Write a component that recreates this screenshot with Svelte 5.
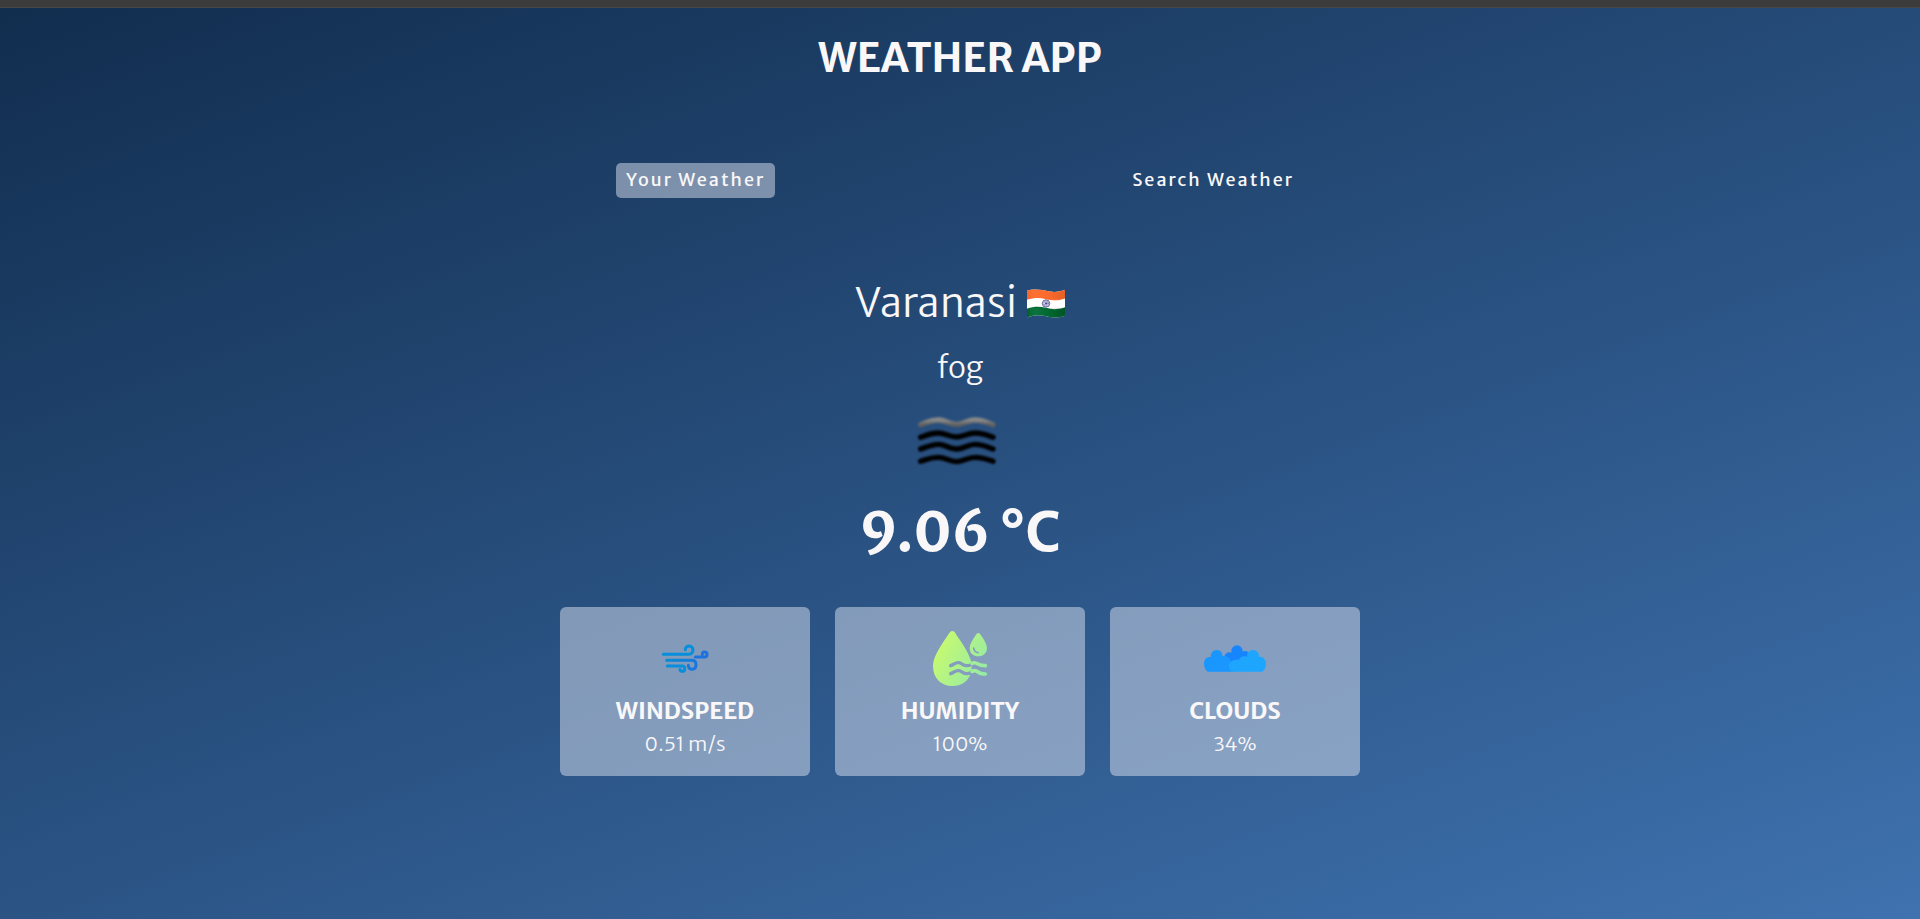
<script>
  let tab = $state('your');
</script>

<div class="page">
  <div class="strip"></div>
  <h1>WEATHER APP</h1>

  <nav class="tabs">
    <button class:current={tab === 'your'} onclick={() => (tab = 'your')}>Your Weather</button>
    <button class:current={tab === 'search'} onclick={() => (tab = 'search')}>Search Weather</button>
  </nav>

  <main>
    <div class="place">
      <p class="city">Varanasi</p>
      <svg class="flag" viewBox="0 0 114 86" role="img" aria-label="India">
        <defs>
          <clipPath id="wave"><path d="M0 5 C22 -3 38 1 57 5 C78 10 95 9 114 2 V80 C92 88 76 86 57 81 C38 76 22 77 0 85Z" /></clipPath>
          <linearGradient id="shade" x1="0" x2="1">
            <stop offset="0" stop-color="#000" stop-opacity="0.12" />
            <stop offset="0.25" stop-color="#fff" stop-opacity="0.04" />
            <stop offset="0.6" stop-color="#000" stop-opacity="0.05" />
            <stop offset="1" stop-color="#000" stop-opacity="0.22" />
          </linearGradient>
        </defs>
        <g clip-path="url(#wave)">
          <rect width="114" height="86" fill="#fff" />
          <path d="M0 0H114V28C92 36 76 34 57 30C38 25 22 25 0 32Z" fill="#ff6c2d" />
          <path d="M0 59C22 51 38 52 57 56C76 61 92 62 114 54V86H0Z" fill="#006c32" />
          <rect y="56" width="114" height="30" fill="url(#shade)" />
          <rect width="114" height="30" fill="url(#shade)" opacity="0.5" />
        </g>
        <circle cx="57" cy="43" r="11" fill="#fff" stroke="#3d3d86" stroke-width="2.5" />
        <circle cx="57" cy="43" r="6.5" fill="none" stroke="#7777ae" stroke-width="8" stroke-dasharray="1.3 1.25" />
        <circle cx="57" cy="43" r="3" fill="#3d3d86" />
      </svg>
    </div>
    <p class="desc">fog</p>
    <svg class="fog" viewBox="30 30 300 180" aria-hidden="true">
      <defs>
        <filter id="soft"><feGaussianBlur stdDeviation="2.6" /></filter>
        <linearGradient id="mist" x1="0" y1="0" x2="0" y2="1">
          <stop offset="0" stop-color="#8a8a8a" />
          <stop offset="1" stop-color="#606060" />
        </linearGradient>
      </defs>
      <g fill="none" stroke-width="16" stroke-linecap="round" stroke-linejoin="round" filter="url(#soft)">
        <path stroke="url(#mist)" d="M62 74C84 67 92 60 114 60S148 73 170 73S202 60 225 60S258 67 279 74" />
        <path stroke="#000" d="M62 112C84 104 92 99 114 99S148 111 170 111S202 99 225 99S258 104 279 112" />
        <path stroke="#000" d="M62 147C84 139 98 133 116 133S148 147 170 147S202 133 225 133S258 139 279 147" />
        <path stroke="#000" d="M62 184C84 177 92 172 114 172S152 185 170 185S202 172 225 172S258 177 279 184" />
      </g>
    </svg>
    <p class="temp">9.06 °C</p>

    <div class="cards">
      <section>
        <svg viewBox="9 -21 192 180" aria-hidden="true">
          <defs>
            <linearGradient id="breeze" gradientUnits="userSpaceOnUse" x1="80" y1="40" x2="160" y2="90">
              <stop offset="0" stop-color="#078ad5" />
              <stop offset="1" stop-color="#1c71e0" />
            </linearGradient>
          </defs>
          <g fill="none" stroke="url(#breeze)" stroke-width="9" stroke-linecap="round">
            <path stroke="#078edc" d="M40 58H115C125 58 129 51 129 45C129 29 106 29 106 44" />
            <path d="M50 76H125C135 76 138 82 138 89C138 107 115 107 115 91" />
            <path stroke="#078edc" d="M52 93H96C107 93 107 109 96 109C92 109 90 106 90 103" />
            <path stroke="#1c73df" d="M136 66H163C174 66 174 51 163 51C159 51 157 54 157 58" />
          </g>
        </svg>
        <h2>WINDSPEED</h2>
        <p>0.51 m/s</p>
      </section>
      <section>
        <svg viewBox="24 24 192 180" aria-hidden="true">
          <defs>
            <linearGradient id="dew" gradientUnits="userSpaceOnUse" x1="60" y1="80" x2="210" y2="160">
              <stop offset="0" stop-color="#c5f972" />
              <stop offset="1" stop-color="#91e9aa" />
            </linearGradient>
            <mask id="channels">
              <rect x="24" y="24" width="192" height="180" fill="#fff" />
              <g fill="none" stroke="#000" stroke-width="10" stroke-linecap="round">
                <path d="M92 137C101 134 106 127 116 128S129 138 142 137S151 133 156 131" />
                <path d="M92 161C101 158 106 151 116 152S129 162 142 161S151 157 156 154" />
              </g>
            </mask>
          </defs>
          <path fill="url(#dew)" mask="url(#channels)" d="M97 33C91 33 88 39 84 45C66 72 39 108 39 138C39 174 62 198 97 198C126 198 145 183 153 158C156 150 156 129 152 119C143 92 123 65 109 44C105 38 103 33 97 33Z" />
          <path fill="url(#dew)" d="M175 39C171 39 169 43 166 47C158 59 149 72 149 84C149 100 160 109 175 109S201 99 201 84C201 72 192 59 184 47C181 43 179 39 175 39Z" />
          <path d="M161 84C162 92 167 97 174 98" fill="none" stroke="#849dbe" stroke-width="5" stroke-linecap="round" />
          <g fill="none" stroke="url(#dew)" stroke-width="11" stroke-linecap="round">
            <path d="M156 130C164 126 168 128 174 132S187 137 196 137" />
            <path d="M156 154C164 149 168 151 174 156S187 162 196 162" />
          </g>
        </svg>
        <h2>HUMIDITY</h2>
        <p>100%</p>
      </section>
      <section>
        <svg viewBox="39 -6 192 180" aria-hidden="true">
          <g fill="#1685ff">
            <circle cx="141" cy="63" r="17" />
            <circle cx="118" cy="82" r="15" />
            <circle cx="165" cy="78" r="15" />
            <path d="M105 80L130 65H153L175 85V115H105Z" />
          </g>
          <path fill="#1a97ff" d="M53 125C44 119 42 109 42 99C42 88 52 79 63 80C61 69 69 60 80 60S99 69 97 79C107 75 119 82 121 92C130 97 134 110 130 125Z" />
          <path fill="#1ea6ff" d="M128 125C120 122 117 116 117 109C117 98 126 90 136 90C142 87 145 89 148 90C147 82 158 76 172 80C170 69 178 60 189 60S208 69 207 80C219 79 228 88 228 100C228 109 226 119 217 125Z" />
        </svg>
        <h2>CLOUDS</h2>
        <p>34%</p>
      </section>
    </div>
  </main>
</div>

<style>
  :global(body) {
    margin: 0;
  }
  .page {
    min-height: 100vh;
    box-sizing: border-box;
    display: flex;
    flex-direction: column;
    align-items: center;
    padding-bottom: 40px;
    color: #f9f7f7;
    font-family: 'Merriweather Sans', 'Noto Sans', 'Open Sans', sans-serif;
    background: linear-gradient(160deg, #112d4e 0%, #3f72af 100%);
  }
  .strip {
    align-self: stretch;
    height: 7px;
    background: #3c3c3c;
    border-bottom: 1px solid #474747;
  }
  h1,
  h2,
  p {
    margin: 0;
  }
  h1 {
    margin-top: 25px;
    font-size: 40px;
    line-height: 50px;
    font-weight: 700;
  }
  .tabs {
    width: 100%;
    max-width: 688px;
    margin-top: 80px;
    display: flex;
    justify-content: space-between;
  }
  button {
    padding: 4px 10px 6px;
    border: 0;
    border-radius: 5px;
    color: inherit;
    background: transparent;
    font: 500 18px/25px 'Merriweather Sans', 'Noto Sans', 'Open Sans', sans-serif;
    letter-spacing: 2px;
    cursor: pointer;
  }
  button.current {
    background: rgba(219, 226, 239, 0.5);
  }
  main {
    width: 100%;
    max-width: 800px;
    margin-top: 77px;
    display: flex;
    flex-direction: column;
    align-items: center;
  }
  .place {
    display: flex;
    align-items: center;
    gap: 10px;
  }
  .city {
    font-size: 40px;
    line-height: 56px;
    font-weight: 300;
  }
  .flag {
    width: 38px;
    height: 29px;
  }
  .desc {
    margin-top: 16px;
    font-size: 30px;
    line-height: 40px;
    font-weight: 300;
  }
  .fog {
    width: 100px;
    height: 60px;
    margin-top: 23px;
  }
  .temp {
    margin-top: 25px;
    font-size: 55px;
    line-height: 76px;
    font-weight: 700;
  }
  .cards {
    align-self: stretch;
    margin-top: 36px;
    display: grid;
    grid-template-columns: repeat(3, 1fr);
    gap: 25px;
  }
  section {
    display: flex;
    flex-direction: column;
    align-items: center;
    padding: 21px 16px 16px;
    border-radius: 6px;
    background: rgba(219, 226, 239, 0.5);
  }
  section svg {
    width: 64px;
    height: 60px;
  }
  h2 {
    margin-top: 6px;
    font-size: 23px;
    line-height: 34px;
    font-weight: 600;
  }
  section p {
    font-size: 20px;
    line-height: 32px;
    font-weight: 300;
  }
</style>
